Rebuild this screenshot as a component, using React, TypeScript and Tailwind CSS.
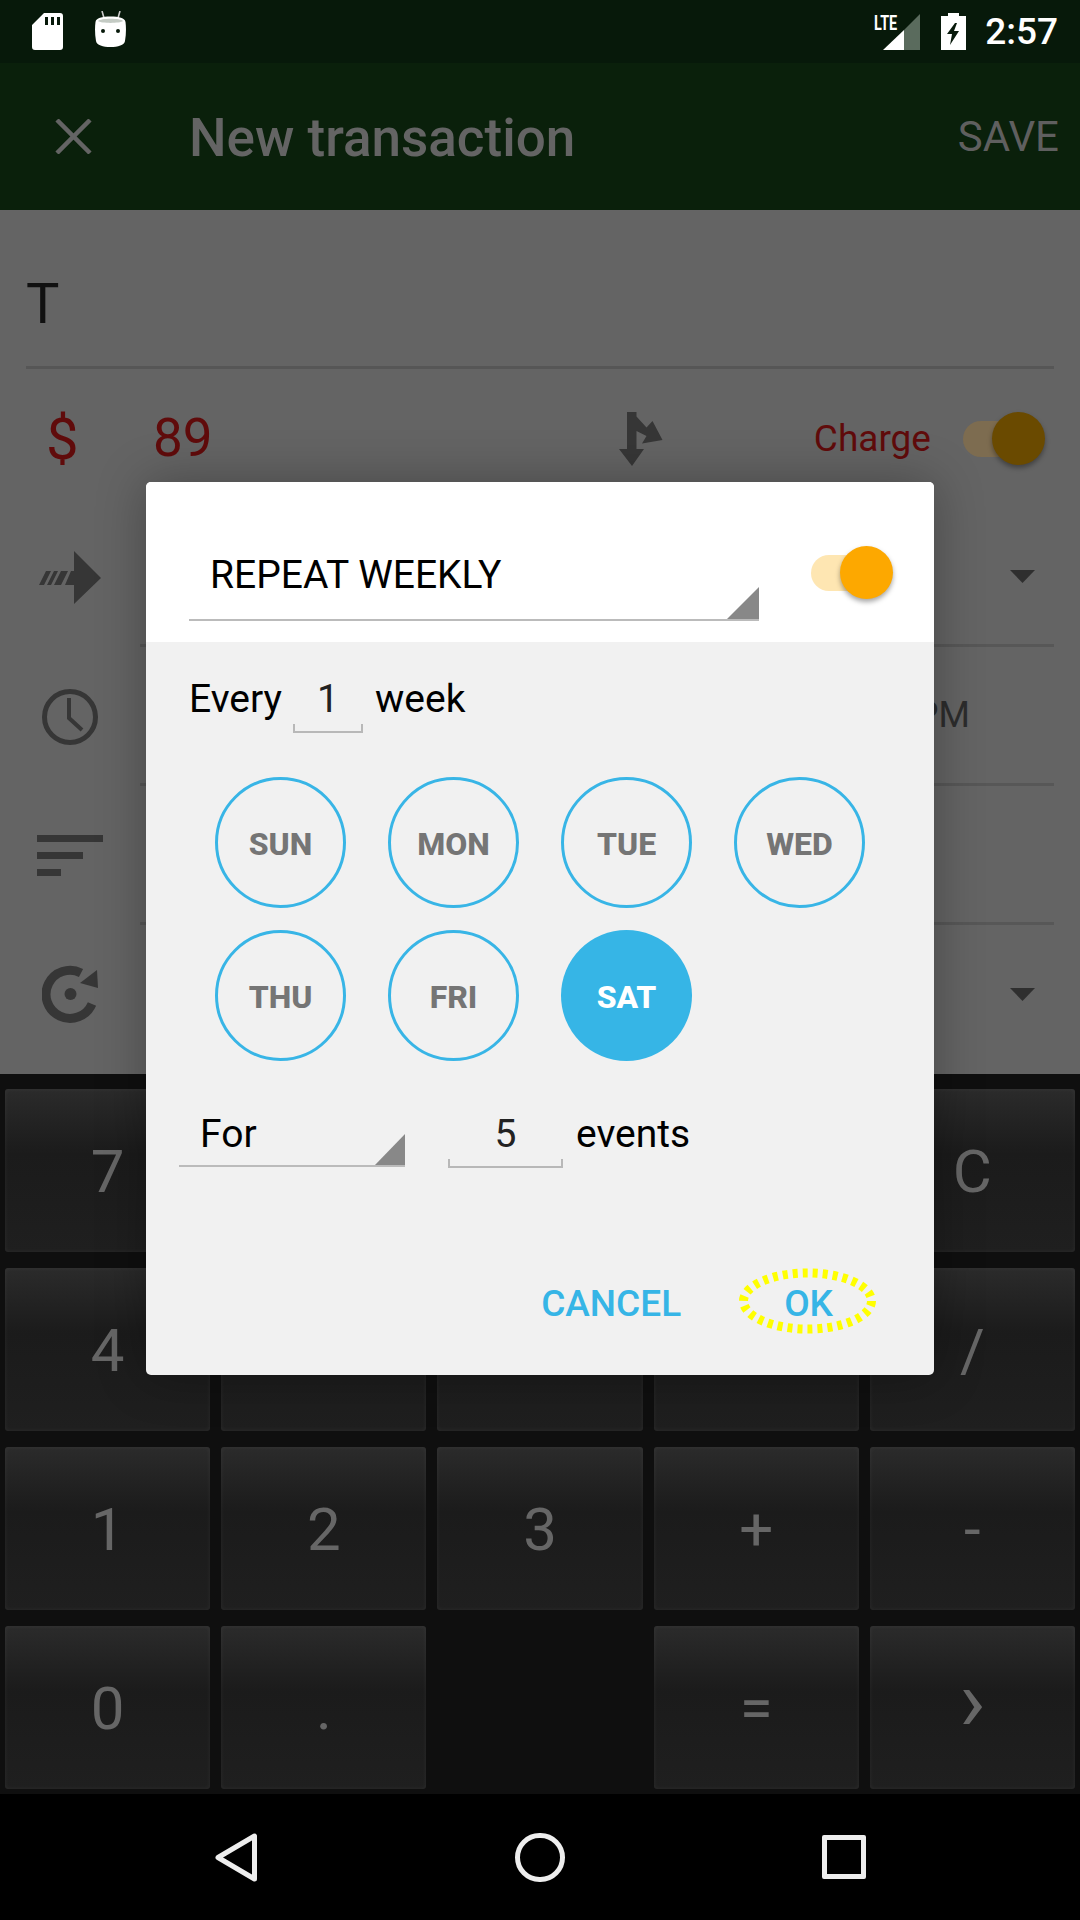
/** Repeat-weekly dialog over a dimmed "New transaction" form with its calculator keypad. */

const DAYS = ["SUN", "MON", "TUE", "WED", "THU", "FRI", "SAT"];
const KEYS = ["7", "8", "9", "", "C", "4", "5", "6", "", "/", "1", "2", "3", "+", "-", "0", ".", null, "=", "›"];

function StatusBar() {
  return (
    <div className="flex h-[63px] items-center bg-[#07190a] pl-[32px] pr-[22px]">
      <svg viewBox="0 0 31 37" className="h-[37px] w-[31px]">
        <path
          fillRule="evenodd"
          fill="#fff"
          d="M12 0h16a3 3 0 0 1 3 3v31a3 3 0 0 1-3 3H3a3 3 0 0 1-3-3V12ZM13 4v8h3V4ZM19 4v8h3V4ZM25 4v8h3V4Z"
        />
      </svg>
      <svg viewBox="0 0 31 36" className="mb-[5px] ml-[32px] h-[36px] w-[31px]">
        <path d="M7 0l2 7M25 0l-2 7" stroke="#ccc" strokeWidth="1.6" />
        <path
          fill="#fff"
          d="M15.5 5.5C24 5.5 30 7 30.5 11c.7 5 .7 12-.5 19-.6 4-7 6-14.5 6S1.600 34 1 30C-.2 23-.2 16 .5 11 1 7 7 5.500 15.500 5.500Z"
        />
        <path fill="#c4cbc4" d="M3 10c2-3 23-3 25 0-3 2.500-22 2.500-25 0Z" />
        <circle cx="8" cy="20" r="2" fill="#07190a" />
        <circle cx="23" cy="20" r="2" fill="#07190a" />
      </svg>
      <div className="ml-auto flex items-center">
        <div className="relative h-[36px] w-[46px]">
          <svg viewBox="0 0 46 36" className="h-[36px] w-[46px]">
            <path fill="#5a6b5d" d="M46 0v36H30V16Z" />
            <path fill="#fff" d="M9 36 30 16v20Z" />
          </svg>
          <span className="absolute left-0 top-[-1px] origin-left scale-x-[0.72] text-[20px] font-bold leading-[20px] text-white">
            LTE
          </span>
        </div>
        <svg viewBox="0 0 25 37" className="ml-[21px] h-[37px] w-[25px]">
          <path
            fillRule="evenodd"
            fill="#fff"
            d="M7 0h11v3h7v34H0V3h7ZM14 10 6 21h5l-2 11 9-14h-5l3-8Z"
          />
        </svg>
        <span className="ml-[19px] text-[37px] font-medium leading-none text-white">2:57</span>
      </div>
    </div>
  );
}

function AppBar() {
  return (
    <div className="flex h-[147px] items-center bg-[#0a200b] pl-[55px] pr-[21px]">
      <svg viewBox="0 0 37 35" className="h-[35px] w-[37px]">
        <path d="M2 1l33 33M35 1 2 34" stroke="#646464" strokeWidth="4.500" />
      </svg>
      <span className="ml-[97px] pt-[4px] text-[53px] font-medium leading-none text-[#646464]">New transaction</span>
      <span className="ml-auto text-[42px] leading-none text-[#5f5f5f]">SAVE</span>
    </div>
  );
}

function Toggle({ track, thumb }: { track: string; thumb: string }) {
  return (
    <div className="relative h-[36px] w-[72px]">
      <div className={`h-[36px] w-[72px] rounded-full ${track}`} />
      <div className={`absolute right-[-10px] top-[-9px] h-[53px] w-[53px] rounded-full shadow-[0_3px_5px_rgba(0,0,0,0.35)] ${thumb}`} />
    </div>
  );
}

function Caret() {
  return (
    <svg viewBox="0 0 25 13" className="h-[13px] w-[25px]">
      <path d="M0 0h25L12.500 13Z" fill="#2f2f2f" />
    </svg>
  );
}

function FormRow({ icon, children, height }: { icon: React.ReactNode; children?: React.ReactNode; height: string }) {
  return (
    <div className={`flex ${height}`}>
      <div className="flex w-[140px] items-center justify-center">{icon}</div>
      <div className="mr-[26px] flex flex-1 items-center justify-end border-b-[3px] border-[#575757] pr-[19px]">
        {children}
      </div>
    </div>
  );
}

function Form() {
  return (
    <div className="flex h-[864px] flex-col bg-[#646464]">
      <div className="mx-[26px] h-[159px] border-b-[3px] border-[#565656] pt-[66px] text-[56px] leading-none text-[#111]">
        T
      </div>
      <div className="flex h-[139px] items-center pl-[46px] pr-[45px] text-[#600b0b]">
        <span className="w-[107px] text-[58px] leading-none">$</span>
        <span className="text-[53px] leading-none">89</span>
        <svg viewBox="0 0 44 54" className="ml-[406px] h-[54px] w-[44px]">
          <path
            fill="#363636"
            d="M8 0h9.500v4.500L27.500 15.500 33.500 9 43.500 28 23 31.500 27.500 24 17.500 19V37H25L13 54 0 37H8Z"
          />
        </svg>
        <span className="ml-auto text-[37px] leading-none">Charge</span>
        <div className="ml-[32px]">
          <Toggle track="bg-[#7d6c50]" thumb="bg-[#6a4a00]" />
        </div>
      </div>
      <FormRow
        height="h-[139px]"
        icon={
          <svg viewBox="0 0 62 53" className="h-[53px] w-[62px]">
            <path
              fill="#363636"
              d="M35 0 62 27 35 53V34H26L32 20H35ZM0 34 7 20h5L5 34ZM8 34 15 20h4L12 34ZM15 34 22 20h7L22 34Z"
            />
          </svg>
        }
      >
        <Caret />
      </FormRow>
      <FormRow
        height="h-[139px]"
        icon={
          <svg viewBox="0 0 56 56" className="h-[56px] w-[56px]">
            <circle cx="28" cy="28" r="25.500" fill="none" stroke="#363636" strokeWidth="5" />
            <path d="M27 9v20l13 12" fill="none" stroke="#363636" strokeWidth="4" />
          </svg>
        }
      >
        <span className="mr-[65px] text-[36px] leading-none text-[#2c2c2c]">PM</span>
      </FormRow>
      <FormRow
        height="h-[139px]"
        icon={
          <div className="flex w-[66px] flex-col gap-[10px]">
            <div className="h-[7px] w-[66px] bg-[#363636]" />
            <div className="h-[7px] w-[46px] bg-[#363636]" />
            <div className="h-[7px] w-[24px] bg-[#363636]" />
          </div>
        }
      />
      <div className="flex flex-1 items-center justify-between pb-[11px] pl-[42px] pr-[45px]">
        <svg viewBox="0 0 56 58" className="h-[58px] w-[56px]">
          <path d="M39 8A24 24 0 1 0 50 39" fill="none" stroke="#363636" strokeWidth="9" />
          <path d="M55 5 56 23 38 18Z" fill="#363636" />
          <circle cx="28.500" cy="29" r="6" fill="#363636" />
        </svg>
        <Caret />
      </div>
    </div>
  );
}

function Keypad() {
  return (
    <div className="grid h-[720px] grid-cols-5 content-start gap-x-[11px] gap-y-[16px] bg-[#0f0f0f] px-[5px] pt-[15px]">
      {KEYS.map((key, i) =>
        key === null ? (
          <div key={i} />
        ) : (
          <div
            key={i}
            className="flex h-[163px] items-center justify-center rounded-[3px] bg-gradient-to-b from-[#2b2b2b] via-[#1b1b1b] via-40% to-[#1f1f1f] pt-[3px] text-[60px] leading-none text-[#666] shadow-[inset_0_0_5px_rgba(255,255,255,0.06)]"
          >
            {key === "›" ? <span className="mb-[16px] text-[88px] leading-none">{key}</span> : key}
          </div>
        ),
      )}
    </div>
  );
}

function NavBar() {
  return (
    <div className="flex h-[126px] items-center bg-black pl-[215px]">
      <svg viewBox="0 0 42 49" className="h-[49px] w-[42px]">
        <path d="M39.500 3v43L3 24.500Z" fill="none" stroke="#eee" strokeWidth="5" strokeLinejoin="round" />
      </svg>
      <div className="ml-[258px] h-[49px] w-[50px] rounded-full border-[5px] border-[#eee]" />
      <div className="ml-[257px] h-[44px] w-[44px] rounded-[2px] border-[5px] border-[#eee]" />
    </div>
  );
}

function NumberField({ value, width }: { value: string; width: string }) {
  return (
    <div className={`flex flex-col items-center ${width}`}>
      <span className="text-[39px] leading-[42px] text-[#222]">{value}</span>
      <div className={`mt-[4px] h-[9px] border-x-2 border-b-2 border-[#b8b8b8] ${width}`} />
    </div>
  );
}

function SpinnerCorner({ className }: { className: string }) {
  return (
    <svg viewBox="0 0 32 32" preserveAspectRatio="none" className={`absolute bottom-0 right-0 ${className}`}>
      <path d="M32 0v32H0Z" fill="#888" />
    </svg>
  );
}

function RepeatDialog() {
  return (
    <div className="absolute left-[146px] top-[482px] flex h-[893px] w-[788px] flex-col overflow-hidden rounded-[5px] bg-[#f1f1f1] text-black shadow-[0_0_50px_rgba(0,0,0,0.3)]">
      <div className="flex h-[160px] items-start bg-white pl-[43px] pt-[62px]">
        <div className="relative h-[77px] w-[570px] border-b-2 border-[#bbb] pl-[21px] pt-[8px] text-[39px] leading-[46px]">
          REPEAT WEEKLY
          <SpinnerCorner className="h-[32px] w-[32px]" />
        </div>
        <div className="ml-[52px] mt-[11px]">
          <Toggle track="bg-[#fee6b2]" thumb="bg-[#fda800]" />
        </div>
      </div>

      <div className="flex flex-col pt-[36px]">
        <div className="flex pl-[43px] text-[39px] leading-[42px]">
          <span>Every</span>
          <div className="ml-[11px]">
            <NumberField value="1" width="w-[70px]" />
          </div>
          <span className="ml-[12px]">week</span>
        </div>

        <div className="ml-[69px] mt-[44px] grid w-fit grid-cols-4 gap-x-[42px] gap-y-[22px]">
          {DAYS.map((day) => (
            <div
              key={day}
              className={
                day === "SAT"
                  ? "flex h-[131px] w-[131px] items-center justify-center rounded-full bg-[#36b5e6] pt-[2px] text-[32px] font-extrabold text-white"
                  : "flex h-[131px] w-[131px] items-center justify-center rounded-full border-[3px] border-[#38b5e6] pt-[2px] text-[32px] font-extrabold text-[#757575]"
              }
            >
              {day}
            </div>
          ))}
        </div>

        <div className="ml-[33px] mt-[52px] flex text-[39px] leading-[42px]">
          <div className="relative h-[54px] w-[226px] border-b-2 border-[#bbb] pl-[21px]">
            For
            <SpinnerCorner className="h-[31px] w-[30px]" />
          </div>
          <div className="ml-[43px]">
            <NumberField value="5" width="w-[115px]" />
          </div>
          <span className="ml-[13px]">events</span>
        </div>
      </div>

      <div className="mt-auto flex justify-end pb-[50px] pr-[101px] text-[37px] font-medium leading-[42px] text-[#36b5e6]">
        <span>CANCEL</span>
        <div className="relative ml-[103px]">
          OK
          <svg viewBox="0 0 139 66" className="absolute left-[-46px] top-[-15px] h-[66px] w-[139px]">
            <ellipse
              cx="69.500"
              cy="33"
              rx="64"
              ry="28"
              fill="none"
              stroke="#ffff00"
              strokeWidth="9"
              strokeDasharray="5 5"
            />
          </svg>
        </div>
      </div>
    </div>
  );
}

export default function App() {
  return (
    <div className="relative h-[1920px] w-[1080px] overflow-hidden font-['Roboto',sans-serif]">
      <StatusBar />
      <AppBar />
      <Form />
      <Keypad />
      <NavBar />
      <RepeatDialog />
    </div>
  );
}
